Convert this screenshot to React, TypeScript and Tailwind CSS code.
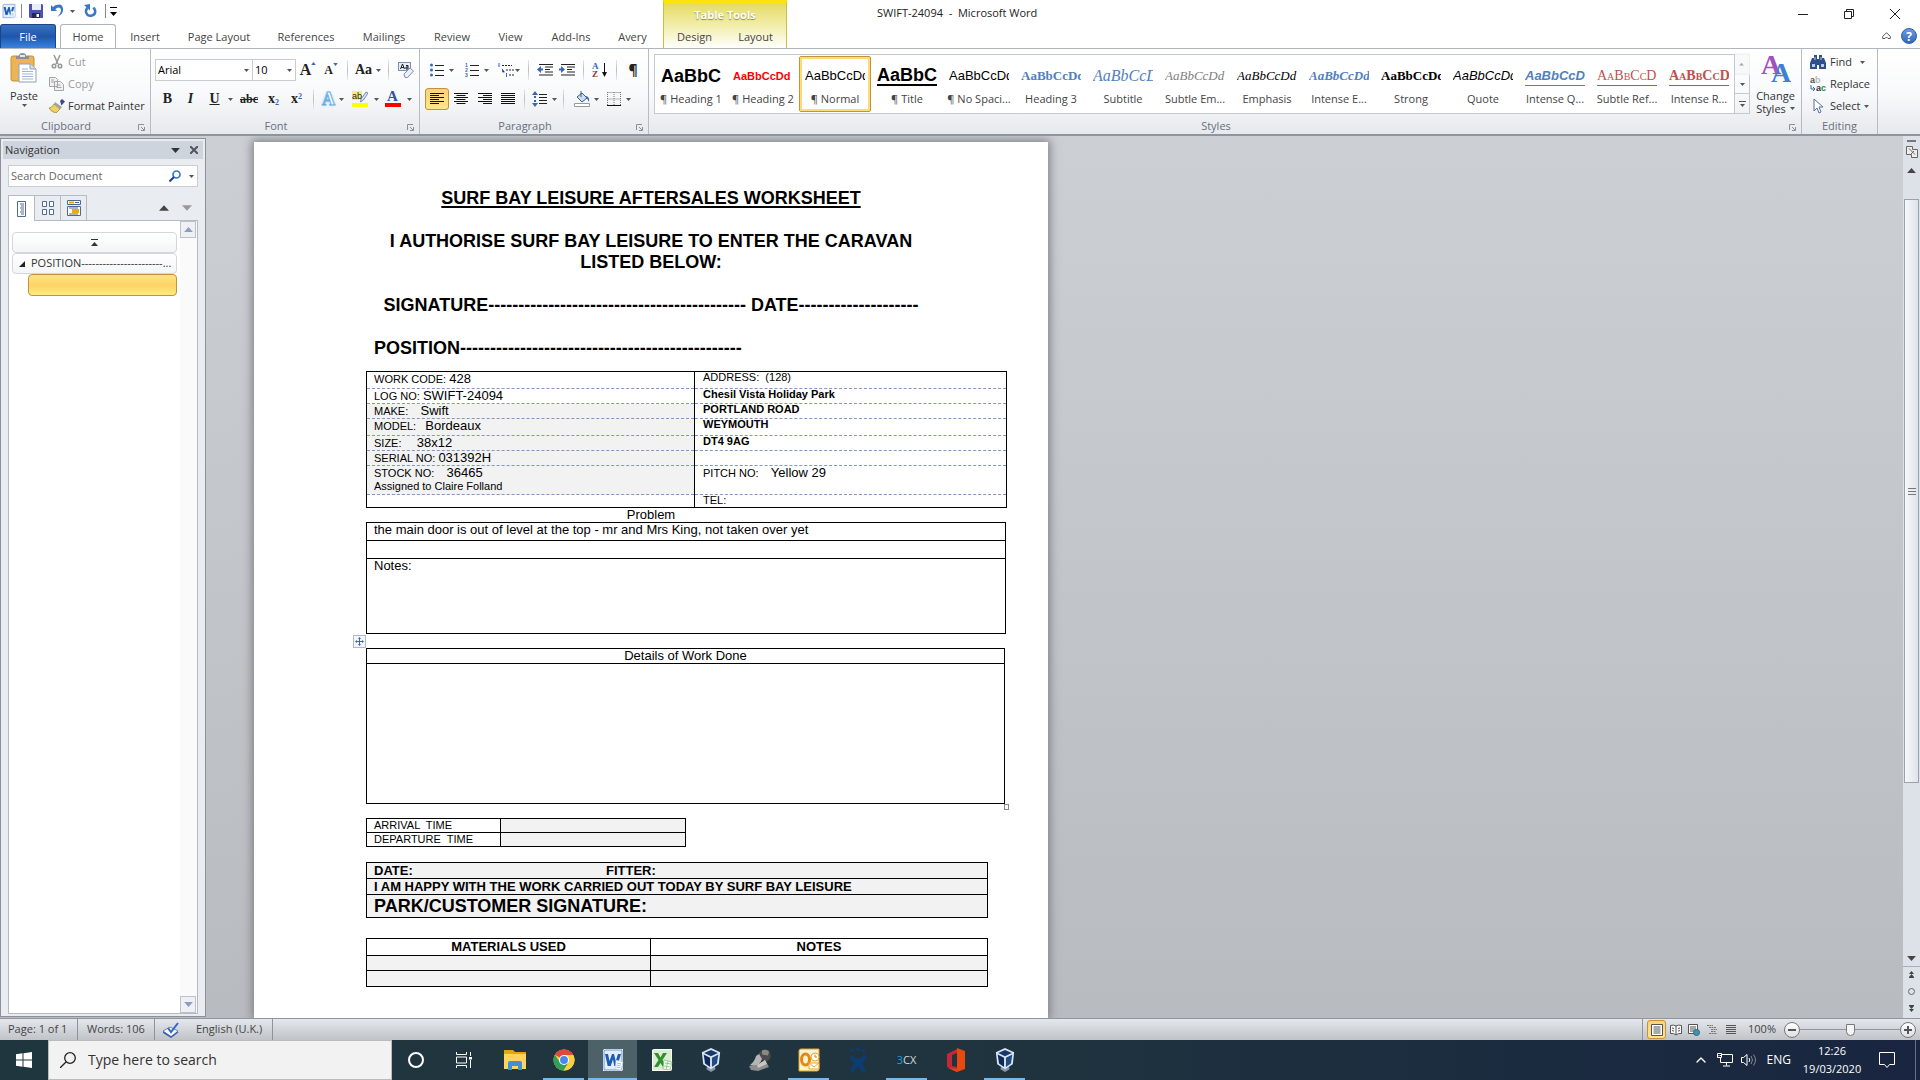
import type { ReactNode } from 'react'
import { ChevronUp } from 'lucide-react'

const tabs = [
  { name: 'Home', width: 'w-14', active: true },
  { name: 'Insert', width: 'w-[58px]' },
  { name: 'Page Layout', width: 'w-[90px]' },
  { name: 'References', width: 'w-[84px]' },
  { name: 'Mailings', width: 'w-[72px]' },
  { name: 'Review', width: 'w-16' },
  { name: 'View', width: 'w-[53px]' },
  { name: 'Add-Ins', width: 'w-[68px]' },
  { name: 'Avery', width: 'w-[55px]' },
]

const styles = [
  { name: '¶ Heading 1', sample: 'AaBbCc', look: 'font-["Liberation_Sans",sans-serif] text-lg font-bold text-black' },
  { name: '¶ Heading 2', sample: 'AaBbCcDd', look: 'font-["Liberation_Sans",sans-serif] text-[11px] font-bold text-[#ff0000]' },
  { name: '¶ Normal', sample: 'AaBbCcDd', look: 'font-["Liberation_Sans",sans-serif] text-[13px] text-black', selected: true },
  { name: '¶ Title', sample: 'AaBbCc', look: 'font-["Liberation_Sans",sans-serif] text-lg font-bold text-black border-b-2 border-black' },
  { name: '¶ No Spaci...', sample: 'AaBbCcDd', look: 'font-["Liberation_Sans",sans-serif] text-[13px] text-black' },
  { name: 'Heading 3', sample: 'AaBbCcDd', look: 'font-["Liberation_Serif",serif] text-[13px] font-bold text-[#4f81bd]' },
  { name: 'Subtitle', sample: 'AaBbCcDd', look: 'font-["Liberation_Serif",serif] text-base italic text-[#4f81bd]' },
  { name: 'Subtle Em...', sample: 'AaBbCcDd', look: 'font-["Liberation_Serif",serif] text-[13px] italic text-[#808080]' },
  { name: 'Emphasis', sample: 'AaBbCcDd', look: 'font-["Liberation_Serif",serif] text-[13px] italic text-black' },
  { name: 'Intense E...', sample: 'AaBbCcDd', look: 'font-["Liberation_Serif",serif] text-[13px] font-bold italic text-[#4f81bd]' },
  { name: 'Strong', sample: 'AaBbCcDd', look: 'font-["Liberation_Serif",serif] text-[13px] font-bold text-black' },
  { name: 'Quote', sample: 'AaBbCcDd', look: 'font-["Liberation_Sans",sans-serif] text-[13px] italic text-black' },
  { name: 'Intense Q...', sample: 'AaBbCcDd', look: 'font-["Liberation_Sans",sans-serif] text-[13px] font-bold italic text-[#4f81bd] border-b border-[#4f81bd]' },
  { name: 'Subtle Ref...', sample: 'AaBbCcDd', look: 'font-["Liberation_Serif",serif] text-sm [font-variant:small-caps] text-[#c0504d] border-b border-[#c0504d]' },
  { name: 'Intense R...', sample: 'AaBbCcDd', look: 'font-["Liberation_Serif",serif] text-sm font-bold [font-variant:small-caps] text-[#c0504d] border-b border-[#c0504d]' },
]

function Caret({ className = 'text-[#666]' }: { className?: string }) {
  return (
    <svg className={`w-[7px] h-1 shrink-0 ${className}`} viewBox="0 0 7 4" fill="currentColor">
      <path d="M0 0h7L3.500 4z" />
    </svg>
  )
}

function SmallCaret() {
  return (
    <svg className="w-[5px] h-[3px] shrink-0 text-[#555]" viewBox="0 0 5 3" fill="currentColor">
      <path d="M0 0h5L2.500 3z" />
    </svg>
  )
}

function Divider() {
  return <span className="w-px h-5 mx-[5px] shrink-0 bg-gradient-to-b from-[#e8e8ea] via-[#b9bdc3] to-[#e8e8ea]" />
}

function Tool({ label, className, children, caret }: { label: string; className: string; children: ReactNode; caret?: boolean }) {
  return (
    <button aria-label={label} className={`flex h-[22px] shrink-0 items-center justify-center gap-1 text-[#222] ${className}`}>
      {children}
      {caret && <SmallCaret />}
    </button>
  )
}

function Group({ title, className, launcher = true, children }: { title: string; className: string; launcher?: boolean; children: ReactNode }) {
  return (
    <section className={`relative flex flex-col border-r border-[#b8bcc2] ${className}`}>
      <div className="flex-1 min-h-0">{children}</div>
      <h2 className={`h-4 text-center text-[11px] leading-4 text-[#6a6f80] ${launcher ? 'pr-[18px]' : ''}`}>{title}</h2>
      {launcher && (
        <svg className="absolute right-[5px] bottom-[3px] w-[7px] h-[7px]" viewBox="0 0 7 7" fill="none" stroke="#8a8f99">
          <path d="M.5 6V.5H6M3 3l3 3M6.500 3v3.500H3" />
        </svg>
      )}
    </section>
  )
}

function Lines({ widths }: { widths: number[] }) {
  return (
    <svg className="w-3.5 h-3" viewBox="0 0 14 12" stroke="#111">
      {widths.map((w, i) => (
        <path key={i} d={`M${w < 0 ? 14 + w : w > 20 ? (14 - (w - 20)) / 2 : 0} ${i * 2 + 0.5}h${w > 20 ? w - 20 : Math.abs(w)}`} />
      ))}
    </svg>
  )
}

function WordLogo({ className }: { className: string }) {
  return (
    <svg className={className} viewBox="0 0 22 24">
      <path d="M1 3q0-2 2-2h18v20q0 2-2 2H1z" fill="#fff" />
      <path d="M2 4q0-2 2-2h16v18q0 2-2 2H2z" fill="#e3eefb" stroke="#3b6fbd" strokeWidth=".7" />
      <path d="M3 6h3l1.500 7L10 6h2l1.700 7L16 6h3l-3.700 12h-3L11 11.500 8.700 18h-3z" fill="#1d5bb5" />
      <path d="M14 12l7 2-2 8-6-1z" fill="#fff" stroke="#a9bfdc" strokeWidth=".5" />
      <path d="M15 15l4 1M14.700 17l4 1M14.300 19l4 .8" stroke="#7d9dcc" strokeWidth=".7" />
    </svg>
  )
}

function VirtualBox() {
  return (
    <svg className="w-[22px] h-[26px]" viewBox="0 0 24 28">
      <path d="M8 20h8l1 4-5 3-5-3z" fill="#8795ac" />
      <path d="M12 1l10 4.500-1.500 13L12 24l-8.500-5.500L2 5.500z" fill="#dbe6f3" />
      <path d="M12 3l7.500 3.300L12 10 4.500 6.300z" fill="#16396b" />
      <path d="M4 8l7 3.500v10l-5.500-3.700z" fill="#102a58" />
      <path d="M20 8l-7 3.500v10l5.500-3.700z" fill="#214b82" />
    </svg>
  )
}

function TitleAndTabs() {
  return (
    <header className="flex h-[49px] shrink-0 border-b border-[#b0b5bb] bg-white">
      <div className="flex w-[663px] shrink-0 flex-col">
        <div className="flex h-[25px] items-center pb-0.5 pl-px">
          <WordLogo className="w-4 h-4" />
          <span className="w-px h-3.5 ml-1 bg-[#888]" />
          <button aria-label="Save" className="ml-[7px]">
            <svg className="w-3.5 h-3.5" viewBox="0 0 14 14">
              <path d="M0 0h13l1 1v13H1l-1-1z" fill="#4a52b4" />
              <path d="M3 0h9v6H3z" fill="#e8edfb" />
              <path d="M3 9h8v5H3z" fill="#25265e" />
              <path d="M7.500 10H10v3H7.500z" fill="#fff" />
            </svg>
          </button>
          <button aria-label="Undo" className="ml-2">
            <svg className="w-3.5 h-3.5" viewBox="0 0 14 14">
              <path d="M0 1v6h6L4.300 5.200Q7 2.500 9 4t0 5.500L6.500 13Q13 9.500 12 4.500T7 .8Q4.500.6 2 3z" fill="#3b76c8" />
            </svg>
          </button>
          <span className="ml-1 px-px"><SmallCaret /></span>
          <button aria-label="Repeat" className="ml-2">
            <svg className="w-[13px] h-3.5" viewBox="0 0 13 14">
              <path d="M3.500 4Q1 6.500 2.500 9.500t5.500 2 3-5.500L9.500 3.500" fill="none" stroke="#3b76c8" strokeWidth="2.500" />
              <path d="M6 0v6.500L0 1z" fill="#3b76c8" />
            </svg>
          </button>
          <span className="w-px h-3.5 ml-2 bg-[#888]" />
          <button aria-label="Customise toolbar" className="ml-1 flex flex-col items-center gap-1">
            <span className="w-[7px] h-px bg-black" />
            <Caret className="text-black" />
          </button>
        </div>
        <nav className="flex flex-1 text-[11px]">
          <button className="w-14 mr-1 rounded-t-[3px] border border-b-0 border-[#1c4585] bg-gradient-to-b from-[#3a72c0] via-[#1e56ad] to-[#3b83e0] pt-0.5 text-white">
            File
          </button>
          {tabs.map((tab) => (
            <button
              key={tab.name}
              className={`h-6 shrink-0 pt-0.5 text-[#444] ${tab.width} ${tab.active ? 'relative rounded-t-[3px] border border-b-0 border-[#b0b5bb] bg-white' : ''}`}
            >
              {tab.name}
            </button>
          ))}
        </nav>
      </div>
      <div className="flex w-[124px] shrink-0 flex-col border-x border-t-4 border-[#c9c13a] border-t-[#fde30c] bg-gradient-to-b from-[#e5dc62] via-[#f2edab] to-white">
        <p className="h-[21px] text-center text-[11px] font-bold leading-[22px] text-white [text-shadow:0_1px_1px_#8f8a3c]">Table Tools</p>
        <div className="flex flex-1 pt-0.5 text-[11px] text-[#444]">
          <button className="flex-1">Design</button>
          <button className="flex-1">Layout</button>
        </div>
      </div>
      <div className="flex flex-1 flex-col">
        <div className="flex h-6 justify-between">
          <h1 className="pl-[90px] text-[11px] leading-[25px] text-[#222] whitespace-pre">SWIFT-24094  -  Microsoft Word</h1>
          <div className="flex pr-0.5">
            <button aria-label="Minimise" className="grid w-[46px] place-items-center pt-1">
              <span className="w-2.5 h-px bg-[#222]" />
            </button>
            <button aria-label="Restore" className="grid w-[46px] place-items-center pt-1">
              <svg className="w-2.5 h-2.5" viewBox="0 0 10 10" fill="none" stroke="#222">
                <path d="M.5 2.500h7v7h-7zM2.500 2V.5h7v7H8" />
              </svg>
            </button>
            <button aria-label="Close" className="grid w-[46px] place-items-center pt-1">
              <svg className="w-2.5 h-2.5" viewBox="0 0 10 10" stroke="#222">
                <path d="M0 0l10 10M10 0L0 10" />
              </svg>
            </button>
          </div>
        </div>
        <div className="flex flex-1 items-center justify-end gap-2.5 pr-[3px]">
          <button aria-label="Minimise the ribbon">
            <svg className="w-[9px] h-2" viewBox="0 0 9 8" fill="#fff" stroke="#555">
              <path d="M4.500.7L.7 4.500v2H3L4.500 5 6 6.500h2.300v-2z" />
            </svg>
          </button>
          <button aria-label="Help" className="w-4 h-4 rounded-full border border-[#2d5ca8] bg-gradient-to-b from-[#6d9ce0] to-[#2f68bf] text-xs font-bold leading-[13px] text-white">
            ?
          </button>
        </div>
      </div>
    </header>
  )
}

function ClipboardGroup() {
  return (
    <Group title="Clipboard" className="w-[151px]">
      <div className="flex h-full">
        <button className="flex w-12 shrink-0 flex-col items-center pt-1 text-[11px] leading-4 text-[#333]">
          <svg className="w-7 h-[30px]" viewBox="0 0 28 30">
            <rect x="1" y="3" width="23" height="25" rx="2" fill="#eab556" stroke="#c98f35" />
            <path d="M6 3h3q0-3 3.500-3T16 3h3v3H6z" fill="#8d9097" />
            <path d="M10 2h5v2h-5z" fill="#e5e7ea" />
            <path d="M9 11h11l6 5v13H9z" fill="#fff" stroke="#8ba0bd" />
            <path d="M20 11v5h6" fill="#d7e0ec" stroke="#8ba0bd" />
            <path d="M12 16h6M12 18.500h11M12 21h11M12 23.500h11M12 26h11" stroke="#9db5d6" />
          </svg>
          <span className="mt-[5px]">Paste</span>
          <SmallCaret />
        </button>
        <div className="flex flex-col pt-0.5 text-[11px] text-[#333]">
          <button className="flex h-[22px] items-center text-[#9a9a9a]">
            <svg className="w-5 h-3.5" viewBox="0 0 20 14" fill="none" stroke="#999" strokeWidth="1.500">
              <path d="M6 0l4 9M12 0L8 9" />
              <circle cx="6" cy="11" r="1.800" />
              <circle cx="12" cy="11" r="1.800" />
            </svg>
            Cut
          </button>
          <button className="flex h-[22px] items-center text-[#9a9a9a]">
            <svg className="w-5 h-3.5" viewBox="0 0 20 14" fill="#f1f1f1" stroke="#a4a4a4">
              <path d="M1.500.5h6l2 2v7h-8zM6.500 4.500h6l3 3v6h-9zM3 3h3M3 5h3M8.500 8h4M8.500 10.500h5" />
            </svg>
            Copy
          </button>
          <button className="flex h-[22px] items-center whitespace-nowrap">
            <svg className="w-5 h-3.5" viewBox="0 0 20 14">
              <path d="M12 2l2-2 3 2.500-3.500 4z" fill="#3a4a86" />
              <path d="M7 3l7 5-1.500 2L6 5z" fill="#9aa3b8" />
              <path d="M6 5l6 5-4 4Q3 13 1 9q3 0 5-4z" fill="#ecd268" stroke="#9c7e23" strokeWidth=".7" />
            </svg>
            Format Painter
          </button>
        </div>
      </div>
    </Group>
  )
}

function FontGroup() {
  const select = 'h-[22px] appearance-none border border-[#c9ccd1] bg-white pl-0.5 text-[11px] text-black'
  return (
    <Group title="Font" className="w-[269px]">
      <div className="flex items-center pl-1 pt-2.5">
        <label className="relative flex items-center">
          <select aria-label="Font" className={`${select} w-[98px]`}>
            <option>Arial</option>
          </select>
          <span className="pointer-events-none absolute right-1"><SmallCaret /></span>
        </label>
        <label className="relative -ml-px flex items-center">
          <select aria-label="Font size" className={`${select} w-11`}>
            <option>10</option>
          </select>
          <span className="pointer-events-none absolute right-1"><SmallCaret /></span>
        </label>
        <Tool label="Grow font" className="w-6 font-['Liberation_Serif',serif] text-base font-bold">
          <span className="flex">A<svg className="w-[5px] h-[3px] mt-1" viewBox="0 0 6 4" fill="#3567b8"><path d="M0 4h6L3 0z" /></svg></span>
        </Tool>
        <Tool label="Shrink font" className="w-[22px] font-['Liberation_Serif',serif] text-xs font-bold">
          <span className="flex">A<svg className="w-[5px] h-[3px] mt-px" viewBox="0 0 6 4" fill="#3567b8"><path d="M0 0h6L3 4z" /></svg></span>
        </Tool>
        <Divider />
        <Tool label="Change case" className="w-[30px] gap-1 font-['Liberation_Serif',serif] text-sm font-bold" caret>
          Aa
        </Tool>
        <Divider />
        <Tool label="Clear formatting" className="w-6">
          <svg className="w-4 h-4" viewBox="0 0 16 16">
            <rect x=".5" y=".5" width="12" height="8" fill="#e4ecf7" stroke="#7b90b0" />
            <path d="M2.500 7l2-5 2 5M3 5.500h3M8 3.500h2V7H8V5h2" fill="none" stroke="#222" />
            <path d="M6 12l6-6 3.500 3-6 6.500H7z" fill="#eef0fb" stroke="#7f8ab5" />
          </svg>
        </Tool>
      </div>
      <div className="flex items-center pl-[5px] pt-[7px] font-['Liberation_Serif',serif] text-sm">
        <Tool label="Bold" className="w-[23px] font-bold">B</Tool>
        <Tool label="Italic" className="w-[23px] font-bold italic">I</Tool>
        <Tool label="Underline" className="w-[34px] gap-2 pl-1 font-bold" caret><span className="underline">U</span></Tool>
        <Tool label="Strikethrough" className="w-[26px] text-xs font-bold line-through">abc</Tool>
        <Tool label="Subscript" className="w-[23px] font-bold">
          <span>x<sub className="text-[8px] text-[#3567b8]">2</sub></span>
        </Tool>
        <Tool label="Superscript" className="w-[23px] font-bold">
          <span>x<sup className="text-[8px] text-[#3567b8]">2</sup></span>
        </Tool>
        <Divider />
        <Tool label="Text effects" className="w-7 gap-1 text-lg font-bold" caret>
          <span className="text-white [-webkit-text-stroke:1px_#6aaee0] [text-shadow:0_0_3px_#8cc8ee]">A</span>
        </Tool>
        <Tool label="Highlight" className="w-[34px] gap-1.5 pl-0.5" caret>
          <svg className="w-4 h-4" viewBox="0 0 16 16">
            <path d="M0 0h10v9H0z" fill="#f4f07a" />
            <path d="M0 12h16v4H0z" fill="#ff0" />
            <path d="M9 8l5-7 2 1-4.500 7-3 2z" fill="#d8e2f3" stroke="#5b74a8" strokeWidth=".8" />
            <text x="0" y="8" fontSize="9" fontFamily="Liberation Sans, sans-serif" fill="#222">ab</text>
          </svg>
        </Tool>
        <Tool label="Font colour" className="w-[34px] gap-1.5" caret>
          <span className="flex h-4 w-4 flex-col items-center border-b-4 border-[#ff0000] text-[15px] font-bold leading-[10px] text-[#2f5597]">A</span>
        </Tool>
      </div>
    </Group>
  )
}

function ListIcon({ marks }: { marks: string[] }) {
  return (
    <svg className="w-3.5 h-3.5" viewBox="0 0 14 14">
      {marks.map((mark, i) => (
        <g key={i}>
          {mark === '•' ? (
            <circle cx="1.500" cy={i * 5 + 2} r="1.500" fill="#3567b8" />
          ) : (
            <text x="0" y={i * 5 + 4} fontSize="5" fontWeight="bold" fontFamily="Liberation Sans, sans-serif" fill="#3567b8">{mark}</text>
          )}
          <path d={`M5 ${i * 5 + 2.5}h9`} stroke="#222" />
        </g>
      ))}
    </svg>
  )
}

function ParagraphGroup() {
  return (
    <Group title="Paragraph" className="w-[229px]">
      <div className="flex items-center pl-[5px] pt-2.5">
        <Tool label="Bullets" className="w-[34px] gap-[5px]" caret><ListIcon marks={['•', '•', '•']} /></Tool>
        <Tool label="Numbering" className="w-[35px] gap-[5px]" caret><ListIcon marks={['1', '2', '3']} /></Tool>
        <Tool label="Multilevel list" className="w-[29px] gap-px" caret>
          <svg className="w-4 h-3.5" viewBox="0 0 16 14" stroke="#222">
            <path d="M4 2.500h10M8 7h8M11 12h5" strokeDasharray="2 1" />
            <path d="M1 0v4M4.500 6v3h2M8.500 10v4" stroke="#3567b8" />
          </svg>
        </Tool>
        <Divider />
        <Tool label="Decrease indent" className="w-[22px]">
          <svg className="w-4 h-3" viewBox="0 0 16 12" stroke="#222">
            <path d="M2 .5h14M8 3h8M8 5.500h5M8 8h8M2 11h14" />
            <path d="M0 5.500L4 2v7z" fill="#3567b8" stroke="none" />
            <path d="M3 5.500h3" stroke="#3567b8" strokeWidth="2" />
          </svg>
        </Tool>
        <Tool label="Increase indent" className="w-[22px]">
          <svg className="w-4 h-3" viewBox="0 0 16 12" stroke="#222">
            <path d="M2 .5h14M8 3h8M8 5.500h5M8 8h8M2 11h14" />
            <path d="M6 5.500L2 2v7z" fill="#3567b8" stroke="none" />
            <path d="M0 5.500h3" stroke="#3567b8" strokeWidth="2" />
          </svg>
        </Tool>
        <Divider />
        <Tool label="Sort" className="w-[22px]">
          <svg className="w-4 h-4" viewBox="0 0 16 16">
            <text x="0" y="7" fontSize="9" fontWeight="bold" fontFamily="Liberation Serif, serif" fill="#3567b8">A</text>
            <text x="0" y="15" fontSize="9" fontWeight="bold" fontFamily="Liberation Serif, serif" fill="#9c2f2f">Z</text>
            <path d="M12.500 1v10" stroke="#111" />
            <path d="M10 10h5l-2.500 5z" fill="#111" />
          </svg>
        </Tool>
        <Divider />
        <Tool label="Show marks" className="w-[22px] text-sm font-bold">¶</Tool>
      </div>
      <div className="flex items-center pl-[5px] pt-[7px]">
        <Tool label="Align left" className="w-6 rounded-[3px] border border-[#c2933a] bg-gradient-to-b from-[#fcd277] to-[#fee58a]"><Lines widths={[14, 9, 14, 9, 14, 9]} /></Tool>
        <Tool label="Centre" className="w-6"><Lines widths={[34, 29, 34, 29, 34, 29]} /></Tool>
        <Tool label="Align right" className="w-6"><Lines widths={[-14, -9, -14, -9, -14, -9]} /></Tool>
        <Tool label="Justify" className="w-[22px]"><Lines widths={[14, 14, 14, 14, 14, 14]} /></Tool>
        <Divider />
        <Tool label="Line spacing" className="w-7 gap-0.5" caret>
          <svg className="w-4 h-4" viewBox="0 0 16 16" stroke="#222">
            <path d="M7 3.500h8M7 6.500h8M7 9.500h8M7 12.500h8" />
            <path d="M3 0l3 4H0zM3 16l3-4H0zM2 5h2v2H2zM2 9h2v2H2z" fill="#3567b8" stroke="none" />
          </svg>
        </Tool>
        <Divider />
        <Tool label="Shading" className="w-[34px]" caret>
          <svg className="w-4 h-4" viewBox="0 0 16 16">
            <path d="M3 6l5-4 5 5-5 4z" fill="#cfdced" stroke="#3d5c8c" />
            <path d="M12 5q4 1 3 6-1-3-3-4z" fill="#3567b8" />
            <path d="M7 0v6" stroke="#3d5c8c" />
            <path d="M.5 12.500h15v3H.5z" fill="#fff" stroke="#999" />
          </svg>
        </Tool>
        <Tool label="Borders" className="w-8 gap-[5px]" caret>
          <svg className="w-3.5 h-3.5" viewBox="0 0 14 14" stroke="#777">
            <path d="M.5.500h13M.5 7h13M.5 0v13M7 0v13M13.500 0v13" strokeDasharray="1 1" fill="none" />
            <path d="M0 13.500h14" stroke="#111" />
          </svg>
        </Tool>
      </div>
    </Group>
  )
}

function StylesGroup() {
  return (
    <Group title="Styles" className="flex-1 min-w-0">
      <div className="flex pl-[5px] pt-[5px]">
        <ul className="flex h-[60px] min-w-0 flex-1 overflow-hidden border border-[#c5c9ce] bg-white">
          {styles.map((style) => (
            <li key={style.name} className="w-[72px] shrink-0 py-px">
              <button className={`flex h-14 w-full flex-col items-center rounded-[2px] border pt-[7px] ${style.selected ? 'border-[#c2933a] shadow-[inset_0_0_0_2px_#fedc75]' : 'border-transparent'}`}>
                <span className="flex h-6 w-[60px] items-center overflow-hidden">
                  <span className={`shrink-0 leading-[18px] ${style.look}`}>{style.sample}</span>
                </span>
                <span className="mt-[3px] text-[11px] leading-4 text-[#444] whitespace-nowrap">{style.name}</span>
              </button>
            </li>
          ))}
        </ul>
        <div className="flex h-[60px] w-[15px] shrink-0 flex-col">
          <button aria-label="Row up" className="grid flex-1 rotate-180 place-items-center border border-r-0 border-[#dcdfe2] bg-[#f4f5f7] opacity-50">
            <SmallCaret />
          </button>
          <button aria-label="Row down" className="grid flex-1 place-items-center border-r border-[#c5c9ce]">
            <SmallCaret />
          </button>
          <button aria-label="More styles" className="flex flex-1 flex-col items-center justify-center gap-0.5 border border-l-0 border-[#c5c9ce]">
            <span className="w-[7px] h-px bg-[#555]" />
            <SmallCaret />
          </button>
        </div>
        <button className="flex w-[51px] shrink-0 flex-col items-center text-[11px] leading-[13px] text-[#333]">
          <svg className="w-[30px] h-7" viewBox="0 0 30 28" fontFamily="Liberation Serif, serif" fontWeight="bold">
            <text x="0" y="20" fontSize="28" fill="#a24fc0">A</text>
            <text x="10" y="28" fontSize="28" fill="#3f7fd6">A</text>
          </svg>
          <span className="mt-[7px]">Change</span>
          <span className="flex items-center gap-1">Styles <SmallCaret /></span>
        </button>
      </div>
    </Group>
  )
}

function EditingGroup() {
  return (
    <Group title="Editing" className="w-[76px]" launcher={false}>
      <div className="flex flex-col pl-2 pt-0.5 text-[11px] text-[#333]">
        <button className="flex h-[22px] items-center gap-1">
          <svg className="w-4 h-4" viewBox="0 0 16 16">
            <path d="M2 4h2V1h3v4h2V1h3v3h2l2 5v6H9v-4H7v4H0V9z" fill="#2f4f8c" />
            <path d="M2 10h3v3H2zM11 10h3v3h-3zM4.500 3h1v3h-1zM10.500 3h1v3h-1z" fill="#b9cdec" />
          </svg>
          Find <span className="pl-1"><SmallCaret /></span>
        </button>
        <button className="flex h-[22px] items-center gap-1">
          <svg className="w-4 h-4" viewBox="0 0 16 16" fontFamily="Liberation Sans, sans-serif" fontWeight="bold" fontSize="9">
            <text x="0" y="7" fill="#555">a</text>
            <text x="5" y="7" fill="#bbb">b</text>
            <text x="6" y="15" fill="#333">a</text>
            <text x="11" y="15" fill="#2c8a2c">c</text>
            <path d="M1 9v4h4M3 11l2 2-2 2" fill="none" stroke="#3567b8" />
          </svg>
          Replace
        </button>
        <button className="flex h-[22px] items-center gap-1">
          <svg className="w-4 h-4" viewBox="0 0 16 16">
            <path d="M4 1v12l3-3 2 5 2-1-2-5h4z" fill="#fff" stroke="#5470a0" />
          </svg>
          Select <SmallCaret />
        </button>
      </div>
    </Group>
  )
}

function NavigationPane() {
  return (
    <aside className="flex w-[206px] shrink-0 flex-col border border-[#8c9099] bg-[#e9edf2] px-0.5 pt-0.5 mt-0.5 mb-px">
      <div className="flex h-[18px] items-center bg-[#cdd4dd] pl-0.5 pr-[5px]">
        <h2 className="flex-1 text-[11px] text-[#333]">Navigation</h2>
        <button aria-label="Pane options"><Caret className="w-[9px] h-[5px] text-[#333]" /></button>
        <button aria-label="Close pane" className="ml-2.5">
          <svg className="w-2 h-2" viewBox="0 0 8 8" stroke="#555" strokeWidth="2"><path d="M0 0l8 8M8 0L0 8" /></svg>
        </button>
      </div>
      <div className="mx-[5px] mt-[6px] flex h-[22px] items-center border border-[#c9ced5] bg-white pr-[3px]">
        <input aria-label="Search Document" placeholder="Search Document" className="min-w-0 flex-1 pl-0.5 text-[11px] placeholder:text-[#666] outline-none" />
        <svg className="w-3 h-3" viewBox="0 0 12 12" fill="none">
          <circle cx="7.500" cy="4.500" r="3.500" stroke="#3a76cc" strokeWidth="1.700" />
          <path d="M5 7l-4.500 4.500" stroke="#1d3f87" strokeWidth="2" />
        </svg>
        <span className="pl-2"><SmallCaret /></span>
      </div>
      <div className="mx-[5px] mt-2 flex h-[26px] items-center">
        <div className="flex h-full">
          <button aria-label="Headings" className="relative z-10 grid w-[27px] place-items-center border border-b-0 border-[#b5bac4] bg-white">
            <svg className="w-2.5 h-4" viewBox="0 0 10 16" fill="#fff" stroke="#52688f">
              <path d="M.5.500h8v15h-8zM3 3h4M4 5h3M3 7h4M4 9h3M3 11h4M4 13h3" />
            </svg>
          </button>
          <button aria-label="Pages" className="grid w-[26px] place-items-center border-y border-r border-[#b5bac4]">
            <svg className="w-3 h-3.5" viewBox="0 0 12 14" fill="#fff" stroke="#52688f">
              <path d="M.5.500h4v5h-4zM7.500.500h4v5h-4zM.5 8.500h4v5h-4zM7.500 8.500h4v5h-4z" />
            </svg>
          </button>
          <button aria-label="Results" className="grid w-[26px] place-items-center border-y border-r border-[#b5bac4]">
            <svg className="w-3.5 h-4" viewBox="0 0 14 16" fill="#fff" stroke="#52688f">
              <path d="M.5.500h13v4H.5zM.5 6.500h13v9H.5z" />
              <path d="M2 1.500h5v2H2zM5 9h7v4H5z" fill="#f5a800" stroke="none" />
              <path d="M8 2.500h4M2 8h9M2 14h9" />
            </svg>
          </button>
        </div>
        <div className="ml-auto flex gap-[13px] pr-1.5">
          <button aria-label="Previous heading"><Caret className="w-[10px] h-1.5 rotate-180 text-[#444]" /></button>
          <button aria-label="Next heading"><Caret className="w-[10px] h-1.5 text-[#999]" /></button>
        </div>
      </div>
      <div className="mx-[5px] mb-0.5 -mt-px flex min-h-0 flex-1 border border-[#b5bac4] bg-white">
        <div className="flex min-w-0 flex-1 flex-col pt-[11px] pl-[3px] pr-[3px] text-[11px] text-[#333]">
          <button aria-label="Jump to top" className="flex h-[21px] shrink-0 flex-col items-center justify-center gap-0.5 rounded-[4px] border border-[#d3d6da] bg-gradient-to-b from-white to-[#f4f5f6]">
            <span className="w-[7px] h-px bg-[#333]" />
            <Caret className="rotate-180 text-[#333]" />
          </button>
          <button className="flex h-[21px] shrink-0 items-center rounded-[4px] border border-[#d3d6da] bg-gradient-to-b from-white to-[#f4f5f6] pl-1.5">
            <svg className="w-1.5 h-1.5 mr-1.5 shrink-0" viewBox="0 0 6 6"><path d="M6 0v6H0z" fill="#222" /></svg>
            <span className="whitespace-nowrap">POSITION-----------------------...</span>
          </button>
          <button aria-label="Empty heading" className="ml-4 h-[22px] shrink-0 rounded-[4px] border border-[#c2933a] bg-gradient-to-b from-[#fee287] via-[#fdd366] to-[#feec7e]" />
        </div>
        <div className="flex w-[17px] flex-col justify-between bg-[#fafafa] pr-px">
          <button aria-label="Scroll up" className="grid h-[17px] place-items-center border border-[#bcc1cb] bg-[#eef0f4]"><Caret className="w-[9px] h-[5px] rotate-180 text-[#8f9cc4]" /></button>
          <button aria-label="Scroll down" className="grid h-[17px] place-items-center border border-[#bcc1cb] bg-[#eef0f4]"><Caret className="w-[9px] h-[5px] text-[#8f9cc4]" /></button>
        </div>
      </div>
    </aside>
  )
}

const jobRows = [
  { height: 'h-[17px]', label: 'WORK CODE: ', value: '428', right: 'ADDRESS:  (128)' },
  { height: 'h-[15px]', label: 'LOG NO: ', value: 'SWIFT-24094', right: 'Chesil Vista Holiday Park', bold: true },
  { height: 'h-[15px]', label: 'MAKE:    ', value: 'Swift', right: 'PORTLAND ROAD', bold: true, shaded: true },
  { height: 'h-[17px]', label: 'MODEL:   ', value: 'Bordeaux', right: 'WEYMOUTH', bold: true, shaded: true },
  { height: 'h-[15px]', label: 'SIZE:     ', value: '38x12', right: 'DT4 9AG', bold: true, shaded: true },
  { height: 'h-[15px]', label: 'SERIAL NO: ', value: '031392H', right: '', shaded: true },
  { height: 'h-[29px]', label: 'STOCK NO:    ', value: '36465', note: 'Assigned to Claire Folland', right: 'PITCH NO:    ', rightValue: 'Yellow 29', shaded: true },
  { height: 'h-[13px]', right: 'TEL:' },
]

function Worksheet() {
  const table = 'table-fixed border-collapse border border-black'
  const cell = 'border border-black px-[7px] py-0 align-top'
  return (
    <article className="relative mt-1.5 w-[794px] shrink-0 bg-white pl-[112px] pt-[46px] font-['Liberation_Sans',Arial,sans-serif] text-[13px] leading-[13px] text-black shadow-[0_0_9px_2px_#7d8187]">
      <div className="w-[570px] px-2 text-center text-lg font-bold leading-[21px]">
        <h1 className="mb-[22px] underline decoration-2 underline-offset-2">SURF BAY LEISURE AFTERSALES WORKSHEET</h1>
        <p className="mb-[22px]">I AUTHORISE SURF BAY LEISURE TO ENTER THE CARAVAN LISTED BELOW:</p>
        <p className="mb-[22px] whitespace-nowrap">SIGNATURE------------------------------------------- DATE--------------------</p>
        <p className="whitespace-nowrap text-left">POSITION-----------------------------------------------</p>
      </div>

      <table className={`${table} mt-3 w-[641px]`}>
        <colgroup>
          <col className="w-[328px]" />
          <col />
        </colgroup>
        <tbody>
          {jobRows.map((row) => (
            <tr key={row.right + row.label} className={`${row.height} border-b border-dashed border-[#8099bd] last:border-solid last:border-black`}>
              <td className={`border-r border-solid border-r-black py-0 pl-[7px] align-top whitespace-pre ${row.shaded ? 'bg-[#f2f2f2]' : ''}`}>
                {row.label && <span className="text-[11px]">{row.label}</span>}
                {row.value}
                {row.note && <span className="block text-[11px]">{row.note}</span>}
              </td>
              <td className={`py-0 pl-2 align-top text-[11px] leading-[11px] whitespace-pre ${row.bold ? 'font-bold' : ''}`}>
                {row.right}
                {row.rightValue && <span className="text-[13px] leading-[13px]">{row.rightValue}</span>}
              </td>
            </tr>
          ))}
        </tbody>
      </table>

      <p className="w-[570px] text-center leading-[14px]">Problem</p>
      <table className={`${table} w-[640px]`}>
        <tbody>
          <tr className="h-[18px]"><td className={cell}>the main door is out of level at the top - mr and Mrs King, not taken over yet</td></tr>
          <tr className="h-[18px]"><td className={cell} /></tr>
          <tr className="h-[75px]"><td className={cell}>Notes:</td></tr>
        </tbody>
      </table>

      <div className="relative mt-3.5 w-[639px]">
        <span className="absolute -left-[13px] -top-[13px] grid h-[13px] w-[13px] place-items-center border border-[#b5b9c0] bg-[#f3f5f8]">
          <svg className="w-[9px] h-[9px]" viewBox="0 0 9 9" stroke="#3465c0" fill="#3465c0">
            <path d="M4.500 1v7M1 4.500h7" />
            <path d="M4.500 0L6 2H3zM4.500 9L6 7H3zM0 4.500L2 3v3zM9 4.500L7 3v3z" stroke="none" />
          </svg>
        </span>
        <table className={`${table} w-full`}>
          <thead>
            <tr className="h-[15px]"><th className={`${cell} text-center font-normal`}>Details of Work Done</th></tr>
          </thead>
          <tbody>
            <tr className="h-[140px]"><td className={cell} /></tr>
          </tbody>
        </table>
        <span className="absolute -right-1 -bottom-1.5 h-1.5 w-[5px] border border-[#888] bg-white" />
      </div>

      <table className={`${table} mt-3.5 w-80 text-[11px] leading-3 whitespace-pre`}>
        <colgroup>
          <col className="w-[134px]" />
          <col />
        </colgroup>
        <tbody>
          <tr className="h-3.5"><th className={`${cell} text-left font-normal`}>ARRIVAL  TIME</th><td className={`${cell} bg-[#f2f2f2]`} /></tr>
          <tr className="h-3.5"><th className={`${cell} text-left font-normal`}>DEPARTURE  TIME</th><td className={`${cell} bg-[#f2f2f2]`} /></tr>
        </tbody>
      </table>

      <table className={`${table} mt-[15px] w-[622px] bg-[#f2f2f2] font-bold leading-[15px]`}>
        <tbody>
          <tr className="h-4">
            <td className={cell}>
              <div className="flex"><span className="w-[232px]">DATE:</span><span>FITTER:</span></div>
            </td>
          </tr>
          <tr className="h-4"><td className={cell}>I AM HAPPY WITH THE WORK CARRIED OUT TODAY BY SURF BAY LEISURE</td></tr>
          <tr className="h-[23px]"><td className={`${cell} text-lg leading-[22px]`}>PARK/CUSTOMER SIGNATURE:</td></tr>
        </tbody>
      </table>

      <table className={`${table} mt-5 w-[622px]`}>
        <colgroup>
          <col className="w-[284px]" />
          <col />
        </colgroup>
        <thead>
          <tr className="h-[17px]">
            <th className="border border-black p-0 align-top font-bold leading-[15px]">MATERIALS USED</th>
            <th className="border border-black p-0 align-top font-bold leading-[15px]">NOTES</th>
          </tr>
        </thead>
        <tbody className="bg-[#f2f2f2]">
          <tr className="h-[15px]"><td className={cell} /><td className={cell} /></tr>
          <tr className="h-4"><td className={cell} /><td className={cell} /></tr>
        </tbody>
      </table>
    </article>
  )
}

function DocumentScrollbar() {
  return (
    <div className="flex w-[17px] shrink-0 flex-col items-center bg-[#dde2e9] pt-1 text-[#444]">
      <span className="h-0.5 w-[9px] bg-[#777]" />
      <button aria-label="View ruler" className="mt-1">
        <svg className="block w-3 h-3" viewBox="0 0 12 12" fill="#eee" stroke="#666">
          <path d="M.5.500h6v3h5v8h-6v-3h-5zM3 2.500l6 6M5 8l3-3" />
        </svg>
      </button>
      <button aria-label="Scroll up" className="mt-[9px] h-1.5"><Caret className="block w-[9px] h-[5px] rotate-180 text-[#444]" /></button>
      <div className="mt-[26px] flex h-[584px] w-[15px] flex-col items-center justify-center gap-0.5 border border-[#9aa2b0] bg-gradient-to-r from-[#f7f8fa] to-[#dfe3ea]">
        <span className="h-px w-2 bg-[#777]" />
        <span className="h-px w-2 bg-[#777]" />
        <span className="h-px w-2 bg-[#777]" />
      </div>
      <div className="flex-1" />
      <button aria-label="Scroll down"><Caret className="block w-[9px] h-[5px] text-[#444]" /></button>
      <div className="mt-[5px] flex w-full flex-col items-center gap-2.5 border-t border-[#a9afb9] pt-1 pb-1.5">
        <button aria-label="Previous page"><svg className="block w-[5px] h-[7px]" viewBox="0 0 5 7" fill="#444"><path d="M2.500 0L5 3H0zM2.500 3L5 6H0zM0 6h5v1H0z" /></svg></button>
        <button aria-label="Select browse object" className="h-[7px] w-[7px] rounded-full border border-[#666]" />
        <button aria-label="Next page"><svg className="block w-[5px] h-[7px]" viewBox="0 0 5 7" fill="#444"><path d="M0 0h5v1H0zM0 1h5L2.500 4zM0 4h5L2.500 7z" /></svg></button>
      </div>
    </div>
  )
}

function StatusBar() {
  const item = 'flex h-full items-center border-r border-[#8f949c]'
  return (
    <footer className="flex h-[22px] shrink-0 items-center border-t border-[#8f96a1] bg-gradient-to-b from-[#e4e7eb] to-[#c0c4c9] text-[11px] text-[#444]">
      <span className={`${item} w-[78px] pl-2`}>Page: 1 of 1</span>
      <span className={`${item} w-[77px] pl-[9px]`}>Words: 106</span>
      <span className={`${item} w-[118px] gap-[17px] pl-2`}>
        <svg className="w-4 h-4" viewBox="0 0 16 16">
          <path d="M0 9l7-4 8 4-7 6z" fill="#f5f8fd" stroke="#6c87bb" />
          <path d="M0 10l8 5 7-5" fill="none" stroke="#3f5fa6" strokeWidth="1.500" />
          <path d="M5 6l3 4 7-9" fill="none" stroke="#3567c8" strokeWidth="2" />
        </svg>
        English (U.K.)
      </span>
      <div className="ml-auto flex h-full items-center border-l border-[#8f949c] pl-1">
        <button aria-label="Print layout" className="grid h-[19px] w-[19px] place-items-center rounded-[3px] border border-[#c2933a] bg-gradient-to-b from-[#fcd277] to-[#fee58a]">
          <svg className="w-3 h-3" viewBox="0 0 12 12" fill="#fff" stroke="#555"><path d="M.5.500h11v11H.5zM2.500 3h7M2.500 5h7M2.500 7h7M2.500 9h7" /></svg>
        </button>
        <button aria-label="Full screen reading" className="grid w-[19px] place-items-center">
          <svg className="w-3 h-3" viewBox="0 0 12 12" fill="#f8f8f8" stroke="#555"><path d="M.5 1.500Q4 .5 6 2q2-1.500 5.500-.5v8Q8 9 6 11 4 9 .5 9.500zM6 2v9M2 4l2 .5M2 6.500l2 .5M8 4.500l2-.5M8 7l2-.5" /></svg>
        </button>
        <button aria-label="Web layout" className="grid w-[17px] place-items-center">
          <svg className="w-3 h-3" viewBox="0 0 12 12" fill="#f8f8f8" stroke="#555"><path d="M.5.500h9v9h-9zM2 3h6M2 5h6M2 7h4" /><circle cx="8.500" cy="8.500" r="3" fill="#3f8fc4" stroke="#2f6d56" /></svg>
        </button>
        <button aria-label="Outline" className="grid w-[19px] place-items-center">
          <svg className="w-2.5 h-2.5" viewBox="0 0 10 10" stroke="#777"><path d="M0 .5h6M2 2.500h7M4 4.500h6M4 6.500h5M2 8.500h8" strokeDasharray="2 .5" /></svg>
        </button>
        <button aria-label="Draft" className="grid w-[19px] place-items-center">
          <svg className="w-2.5 h-2.5" viewBox="0 0 10 10" stroke="#555"><path d="M0 .5h10M0 2.500h10M0 4.500h10M0 6.500h10M0 8.500h10" /></svg>
        </button>
        <button className="w-11 text-center">100%</button>
        <button aria-label="Zoom out" className="grid h-4 w-4 place-items-center rounded-full border border-[#777] bg-gradient-to-b from-white to-[#dcdfe4]">
          <span className="h-0.5 w-2 bg-[#555]" />
        </button>
        <input
          type="range"
          aria-label="Zoom"
          defaultValue={50}
          className="h-4 w-[100px] appearance-none bg-[linear-gradient(#8f96a1,#8f96a1)] bg-[length:100%_1px] bg-center bg-no-repeat [&::-webkit-slider-thumb]:h-3 [&::-webkit-slider-thumb]:w-[9px] [&::-webkit-slider-thumb]:appearance-none [&::-webkit-slider-thumb]:rounded-b-[5px] [&::-webkit-slider-thumb]:border [&::-webkit-slider-thumb]:border-[#777] [&::-webkit-slider-thumb]:bg-[#f4f5f7]"
        />
        <button aria-label="Zoom in" className="mr-1 grid h-4 w-4 place-items-center rounded-full border border-[#777] bg-gradient-to-b from-white to-[#dcdfe4]">
          <svg className="w-2 h-2" viewBox="0 0 8 8" stroke="#555" strokeWidth="2"><path d="M0 4h8M4 0v8" /></svg>
        </button>
      </div>
    </footer>
  )
}

const apps = [
  {
    name: 'File Explorer',
    icon: (
      <svg className="w-[22px] h-5" viewBox="0 0 22 20">
        <path d="M0 0h9l2 2h11v17H0z" fill="#e5a50f" />
        <path d="M0 4h22v15H0z" fill="#ffd35c" />
        <path d="M4 20v-7q0-2 2-2h10q2 0 2 2v7h-4v-4H8v4z" fill="#3a92d8" />
      </svg>
    ),
  },
  {
    name: 'Chrome',
    running: true,
    icon: (
      <svg className="w-[22px] h-6" viewBox="0 0 24 24">
        <circle cx="12" cy="12" r="11.500" fill="#f9cf3f" />
        <path d="M12 12L2 6.300A11.500 11.500 0 0 1 22 6.500H12z" fill="#dc4a3d" />
        <path d="M2 6.300A11.500 11.500 0 0 0 11.500 23.500L17 15 8 15z" fill="#2ea158" />
        <path d="M22 6.500H12l5 8.500-5.500 8.500A11.500 11.500 0 0 0 22 6.500z" fill="#f9cf3f" />
        <circle cx="12" cy="12" r="5.500" fill="#fff" />
        <circle cx="12" cy="12" r="4.300" fill="#4a86ee" />
      </svg>
    ),
  },
  { name: 'Word', active: true, icon: <WordLogo className="w-[22px] h-6" /> },
  {
    name: 'Excel',
    icon: (
      <svg className="w-[22px] h-6" viewBox="0 0 22 24">
        <path d="M1 3q0-2 2-2h18v20q0 2-2 2H1z" fill="#fff" />
        <path d="M2 4q0-2 2-2h16v18q0 2-2 2H2z" fill="#d9efd0" />
        <path d="M3 5h4l2.500 4.500L12 5h4l-4.500 7L16 19h-4l-2.500-4L7 19H3l4.500-7z" fill="#31902f" />
        <path d="M13 12l8 2-2 8-7-1z" fill="#fff" stroke="#7bbb70" strokeWidth=".7" />
        <path d="M14 15l6 1M13 18l6 1M17 13l-2 8" stroke="#7bbb70" strokeWidth=".8" />
      </svg>
    ),
  },
  { name: 'VirtualBox', icon: <VirtualBox /> },
  {
    name: 'Scanner',
    icon: (
      <svg className="w-6 h-6" viewBox="0 0 24 24">
        <path d="M11 5q4-5 9-3 4 3 2 9l-4 3-7-4z" fill="#4c4a4a" />
        <path d="M14 2.500q4-2 7 1l-1 4-6-1z" fill="#8b8988" />
        <path d="M11 6l3 5q-2 6-8 7l-4-1q5-4 6-9z" fill="#b7b5b4" />
        <path d="M1 18l8-1 8-5 4 7-11 4-7-1z" fill="#8f8d8c" />
        <path d="M9 17l8-5 2 4-9 4z" fill="#c8c6c5" />
      </svg>
    ),
  },
  {
    name: 'Outlook',
    running: true,
    icon: (
      <svg className="w-[22px] h-6" viewBox="0 0 22 24">
        <path d="M1 3q0-2 2-2h18v20q0 2-2 2H1z" fill="#fdf0cf" stroke="#e4a325" />
        <ellipse cx="7.500" cy="11.500" rx="4" ry="5.500" fill="none" stroke="#e38a0c" strokeWidth="3" />
        <circle cx="17" cy="9" r="4" fill="#fff" stroke="#e7a52c" />
        <path d="M17 6.500V9h2" fill="none" stroke="#c57f12" />
        <path d="M11 15h10v6H11z" fill="#fff" stroke="#e7a52c" />
        <path d="M11 15l5 4 5-4" fill="none" stroke="#e7a52c" />
      </svg>
    ),
  },
  {
    name: 'Jira',
    icon: (
      <svg className="w-[18px] h-[26px]" viewBox="0 0 20 28" fill="#0d3c73">
        <circle cx="4" cy="3.500" r="2" />
        <circle cx="10" cy="2" r="2" />
        <circle cx="16" cy="3.500" r="2" />
        <path d="M1 8q4 4 9 4t9-4q1 6-5 10 4 3 4 10h-4q0-4-4-7-4 3-4 7H2q0-7 4-10-6-4-5-10z" />
      </svg>
    ),
  },
  {
    name: '3CX',
    running: true,
    icon: <span className="text-[11px] text-[#d5dadd]"><span className="text-[#1f9bd8]">3</span>CX</span>,
  },
  {
    name: 'Office',
    icon: (
      <svg className="w-5 h-6" viewBox="0 0 20 24">
        <path d="M1 6l10-5v4L6 7v11l5 1v5L2 19.500q-1-.5-1-1.500z" fill="#c3273a" />
        <path d="M11 0l8 3v18l-8 3-9-4 9 1z" fill="#e8490f" />
      </svg>
    ),
  },
  { name: 'VirtualBox Manager', running: true, icon: <VirtualBox /> },
]

function Taskbar() {
  return (
    <div className="flex h-10 shrink-0 items-stretch bg-gradient-to-r from-[#20363f] via-[#1f343e] to-[#192540] text-white">
      <button aria-label="Start" className="grid w-12 place-items-center">
        <svg className="w-4 h-4" viewBox="0 0 16 16" fill="#fff">
          <path d="M0 2.200L6.500 1.300v6.200H0zM7.500 1.200L16 0v7.500H7.500zM0 8.500h6.500v6.200L0 13.800zM7.500 8.500H16V16l-8.500-1.200z" />
        </svg>
      </button>
      <label className="flex w-[344px] items-center gap-3 border border-[#bbb] bg-[#f2f2f2] pl-[11px] text-[#222]">
        <svg className="w-4 h-4" viewBox="0 0 16 16" fill="none" stroke="#222" strokeWidth="1.300">
          <circle cx="10" cy="6" r="5.300" />
          <path d="M6 10l-6 6" />
        </svg>
        <input aria-label="Search" placeholder="Type here to search" className="min-w-0 flex-1 bg-transparent text-sm placeholder:text-[#333] outline-none" />
      </label>
      <button aria-label="Cortana" className="grid w-12 place-items-center">
        <span className="h-4 w-4 rounded-full border-2 border-white" />
      </button>
      <button aria-label="Task view" className="mr-0.5 grid w-12 place-items-center">
        <svg className="w-4 h-4" viewBox="0 0 16 16" fill="none" stroke="#fff">
          <path d="M.5 0v2.500h10V0M.5 5h10v6H.500zM.5 16v-2.500h10V16M14.500 0v4M14.500 8v8" />
          <path d="M13 5h3v2.500h-3z" fill="#fff" stroke="none" />
        </svg>
      </button>
      {apps.map((app) => (
        <button key={app.name} aria-label={app.name} className={`relative grid w-[49px] place-items-center ${app.active ? 'bg-[#4d6168]' : ''}`}>
          {app.icon}
          {(app.running || app.active) && <span className={`absolute bottom-0 h-0.5 bg-[#76b9ed] ${app.active ? 'inset-x-0' : 'inset-x-1'}`} />}
        </button>
      ))}
      <div className="ml-auto mr-1 flex items-center border-r border-[#66708a]">
        <button aria-label="Hidden icons" className="mr-2"><ChevronUp className="w-4 h-4" strokeWidth={2} /></button>
        <button aria-label="Network" className="mr-2">
          <svg className="w-4 h-3.5" viewBox="0 0 16 14" fill="none" stroke="#fff">
            <path d="M5 1.500h10.500v8H3.500V5M9.500 9.500v3M6 13h7M.5.500h4v4h-4zM2 2v1M3.500 2v1" />
          </svg>
        </button>
        <button aria-label="Volume" className="mr-2.5">
          <svg className="w-4 h-3.5" viewBox="0 0 16 14" fill="none" stroke="#fff">
            <path d="M.5 4.500h2l3.500-3v11l-3.500-3h-2zM8 5q1.500 2 0 4" />
            <path d="M10 3q3 4 0 8M12.500 1.500q4 5.500 0 11" stroke="#7f8aa0" />
          </svg>
        </button>
        <button className="text-xs">ENG</button>
        <button className="w-[82px] text-center text-[11px] leading-[18px]">
          <time className="block">12:26</time>
          <time className="block">19/03/2020</time>
        </button>
        <button aria-label="Notifications" className="ml-1.5 mr-5">
          <svg className="w-4 h-4" viewBox="0 0 16 16" fill="none" stroke="#fff">
            <path d="M.5.500h15v12h-5l-2.500 3-2.500-3h-5z" />
          </svg>
        </button>
      </div>
    </div>
  )
}

export default function App() {
  return (
    <div className="flex h-screen flex-col overflow-hidden bg-white font-['Open_Sans','Noto_Sans',sans-serif]">
      <TitleAndTabs />
      <div className="flex h-[87px] shrink-0 border-b-2 border-[#90959d] bg-gradient-to-b from-white via-[#f9fafb] to-[#e6e9ed]">
        <ClipboardGroup />
        <FontGroup />
        <ParagraphGroup />
        <StylesGroup />
        <EditingGroup />
        <div className="w-[42px]" />
      </div>
      <main className="flex min-h-0 flex-1 bg-gradient-to-b from-[#cccfd4] to-[#b8bbbf]">
        <NavigationPane />
        <div className="flex min-w-0 flex-1 overflow-hidden pl-12">
          <Worksheet />
        </div>
        <DocumentScrollbar />
      </main>
      <StatusBar />
      <Taskbar />
    </div>
  )
}
